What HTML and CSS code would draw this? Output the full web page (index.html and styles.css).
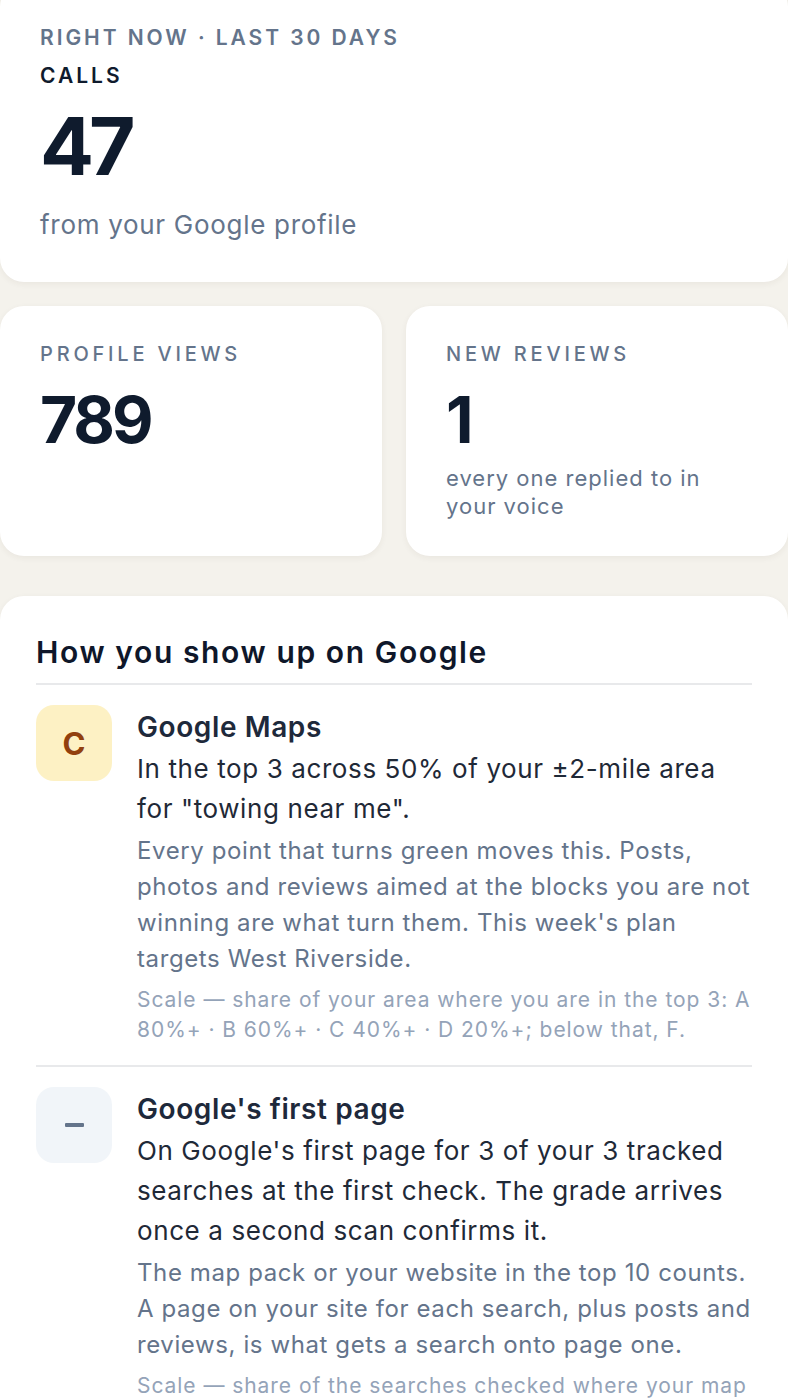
FILE: index.html
```html
<!DOCTYPE html>
<html lang="en">
<head>
<meta charset="utf-8">
<title>Dashboard</title>
<link rel="stylesheet" href="styles.css">
</head>
<body>
<main class="page">
  <section class="card hero">
    <div class="eyebrow">RIGHT NOW · LAST 30 DAYS</div>
    <div class="metric-label">CALLS</div>
    <div class="hero-num">47</div>
    <div class="hero-sub">from your Google profile</div>
  </section>

  <div class="stats">
    <section class="card stat">
      <div class="stat-label">PROFILE VIEWS</div>
      <div class="stat-num">789</div>
    </section>
    <section class="card stat">
      <div class="stat-label">NEW REVIEWS</div>
      <div class="stat-num">1</div>
      <div class="stat-sub">every one replied to in your voice</div>
    </section>
  </div>

  <section class="card showup">
    <h2 class="showup-title">How you show up on Google</h2>
    <div class="row">
      <div class="badge badge-c">C</div>
      <div class="row-body">
        <div class="row-title">Google Maps</div>
        <p class="row-main">In the top 3 across 50% of your ±2-mile area for "towing near me".</p>
        <p class="row-desc">Every point that turns green moves this. Posts, photos and reviews aimed at the blocks you are not winning are what turn them. This week's plan targets West Riverside.</p>
        <p class="row-scale">Scale — share of your area where you are in the top 3: A 80%+ · B 60%+ · C 40%+ · D 20%+; below that, F.</p>
      </div>
    </div>
    <div class="row">
      <div class="badge badge-none"><span class="dash"></span></div>
      <div class="row-body">
        <div class="row-title">Google's first page</div>
        <p class="row-main">On Google's first page for 3 of your 3 tracked searches at the first check. The grade arrives once a second scan confirms it.</p>
        <p class="row-desc">The map pack or your website in the top 10 counts. A page on your site for each search, plus posts and reviews, is what gets a search onto page one.</p>
        <p class="row-scale">Scale — share of the searches checked where your map pack or website is in the top 10: A 80%+ · B 60%+ · C 40%+ · D 20%+; below that, F.</p>
      </div>
    </div>
  </section>
</main>
</body>
</html>
```

FILE: styles.css
```css
* { box-sizing: border-box; }
html, body { margin: 0; padding: 0; }
body {
  background: #f4f2ec;
  font-family: Inter, "Noto Sans", "Liberation Sans", sans-serif;
  color: #0f1b2d;
  -webkit-font-smoothing: antialiased;
}
.page {
  width: 788px;
  margin-top: -17px;
  display: flex;
  flex-direction: column;
}
.card {
  background: #ffffff;
  border-radius: 24px;
  box-shadow: 0 2px 6px rgba(60, 50, 30, 0.06);
}
.hero {
  padding: 40px 40px 39px;
}
.eyebrow {
  font-size: 21px;
  line-height: 30px;
  font-weight: 600;
  letter-spacing: 0.14em;
  color: #64748b;
}
.metric-label {
  font-size: 21px;
  line-height: 30px;
  margin-top: 8px;
  font-weight: 600;
  letter-spacing: 3px;
  color: #0f1b2d;
}
.hero-num {
  font-size: 80px;
  line-height: 90px;
  font-weight: 700;
  letter-spacing: -5px;
  margin-top: 10px;
  color: #0f1b2d;
}
.hero-sub {
  font-size: 26px;
  line-height: 36px;
  margin-top: 16px;
  letter-spacing: 0.7px;
  color: #64748b;
}
.stats {
  margin-top: 24px;
  display: grid;
  grid-template-columns: 1fr 1fr;
  gap: 24px;
}
.stat {
  height: 250px;
  padding: 34px 40px 30px 40px;
}
.stat-label {
  font-size: 20px;
  line-height: 28px;
  font-weight: 500;
  letter-spacing: 3.8px;
  color: #64748b;
}
.stat-num {
  font-size: 64px;
  line-height: 72px;
  font-weight: 700;
  letter-spacing: -3px;
  margin-top: 16px;
  color: #0f1b2d;
}
.stat-sub {
  font-size: 22px;
  line-height: 28px;
  margin-top: 8px;
  letter-spacing: 1px;
  color: #64748b;
}
.showup {
  margin-top: 40px;
  padding: 36px 36px 40px;
}
.showup-title {
  margin: 0;
  font-size: 30px;
  line-height: 40px;
  font-weight: 600;
  letter-spacing: 1.6px;
  color: #0f172a;
  padding-bottom: 11px;
  border-bottom: 2px solid #e8e9eb;
}
.row {
  display: flex;
  gap: 25px;
  padding: 20px 0;
}
.row + .row {
  border-top: 2px solid #e8e9eb;
}
.badge {
  flex: 0 0 76px;
  width: 76px;
  height: 76px;
  border-radius: 18px;
  display: flex;
  align-items: center;
  justify-content: center;
  font-size: 31px;
  font-weight: 700;
}
.badge-c {
  background: #fdf1c4;
  color: #92400e;
}
.badge-none {
  background: #f1f5f9;
}
.dash {
  width: 19px;
  height: 4px;
  background: #64748b;
  border-radius: 1px;
}
.row-body {
  flex: 1;
  min-width: 0;
}
.row-title {
  font-size: 28px;
  line-height: 44px;
  font-weight: 600;
  letter-spacing: 0.6px;
  color: #1e293b;
}
.row-main {
  margin: 0;
  font-size: 26px;
  line-height: 40px;
  letter-spacing: 0.6px;
  color: #1f2937;
}
.row-desc {
  margin: 4px 0 0;
  font-size: 24px;
  line-height: 36px;
  letter-spacing: 0.6px;
  color: #64748b;
}
.row-scale {
  margin: 8px 0 0;
  font-size: 21px;
  line-height: 30px;
  letter-spacing: 0.95px;
  color: #94a3b8;
}
```
